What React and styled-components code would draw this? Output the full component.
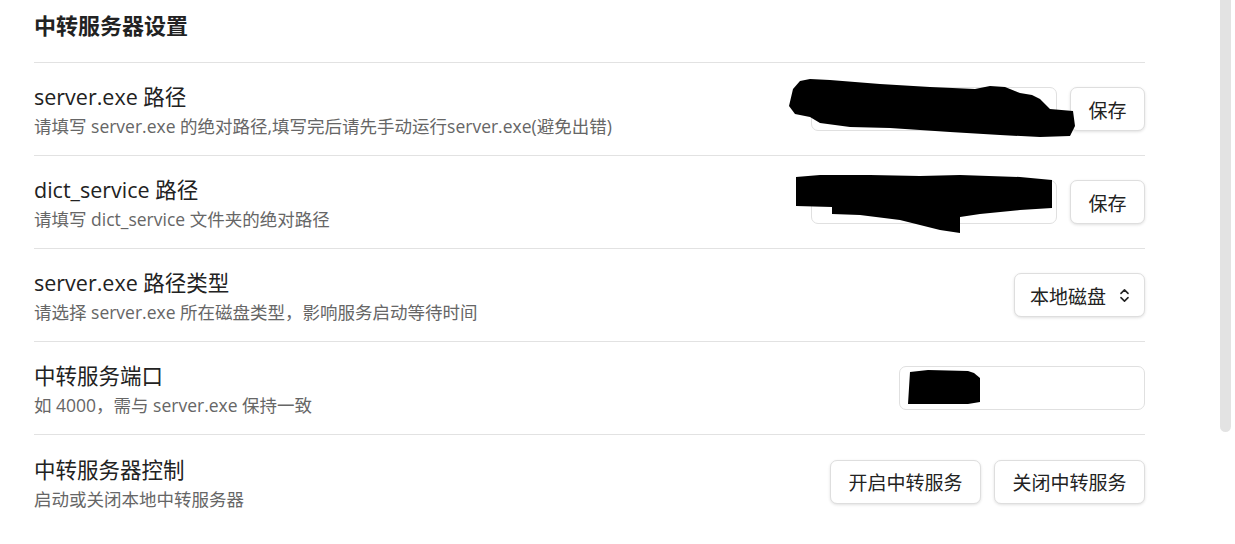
import React from "react";
import styled, { createGlobalStyle } from "styled-components";

const Global = createGlobalStyle`
  html, body { margin: 0; padding: 0; background: #fff; }
  body { font-family: "Open Sans", "Noto Sans CJK SC", sans-serif; color: #1f1f1f; overflow: hidden; }
  * { box-sizing: border-box; }
`;

const Page = styled.div`
  padding: 0 90px 0 34px;
  width: 1235px;
`;

const Heading = styled.h2`
  margin: 0;
  padding: 10px 0 21px;
  font-size: 22px;
  line-height: 31px;
  font-weight: 700;
  color: #222;
  border-bottom: 1px solid #e2e2e2;
`;

const Row = styled.div`
  display: flex;
  align-items: center;
  justify-content: space-between;
  height: 93px;
  border-bottom: ${(p) => (p.$last ? "none" : "1px solid #e2e2e2")};
`;

const Info = styled.div`
  display: flex;
  flex-direction: column;
  gap: 2px;
  padding-top: 4px;
`;

const Title = styled.div`
  font-size: 21.5px;
  line-height: 28px;
  color: #222;
`;

const Desc = styled.div`
  font-size: 17.5px;
  line-height: 26px;
  color: #666;
`;

const Controls = styled.div`
  position: relative;
  display: flex;
  align-items: center;
  gap: 13px;
`;

const Input = styled.input`
  width: 246px;
  height: 44px;
  border: 1px solid #e0e0e0;
  border-radius: 7px;
  background: #fff;
  font-size: 16px;
  padding: 0 12px;
  outline: none;
`;

const Button = styled.button`
  height: 44px;
  padding: 0 17.5px;
  border: 1px solid #dedede;
  border-radius: 7px;
  background: #fff;
  box-shadow: 0 1px 3px rgba(0, 0, 0, 0.12);
  font-family: "Noto Sans CJK SC", sans-serif;
  font-size: 19px;
  color: #222;
  cursor: pointer;
`;

const Select = styled.div`
  display: flex;
  align-items: center;
  gap: 10px;
  height: 44px;
  padding: 0 11px 0 15px;
  border: 1px solid #dedede;
  border-radius: 7px;
  background: #fff;
  box-shadow: 0 1px 3px rgba(0, 0, 0, 0.12);
  font-family: "Noto Sans CJK SC", sans-serif;
  font-size: 19px;
  color: #222;
`;

const Redact = styled.svg`
  position: absolute;
  pointer-events: none;
`;

const Thumb = styled.div`
  position: fixed;
  left: 1220px;
  top: 0;
  width: 11px;
  height: 432px;
  background: #e3e3e3;
  border-radius: 0 0 6px 6px;
`;

function Blob({ left, top, w, h, d }) {
  return (
    <Redact style={{ left, top }} width={w} height={h} viewBox={`0 0 ${w} ${h}`}>
      <path d={d} fill="#000" />
    </Redact>
  );
}

const blob1 =
  "M4 12 L11 4 L21 2 L41 3 L91 7 L141 10 L186 12 L201 9 L216 10 L231 16 L243 18 L251 22 L261 32 L284 34 L286 49 L281 59 L251 60 L211 58 L161 55 L101 51 L61 50 L31 46 L21 40 L6 37 L0 29 Z";
const blob2 =
  "M0 3 L24 1 L74 1 L124 2 L164 1 L224 3 L256 6 L256 34 L224 36 L184 40 L164 43 L164 59 L144 56 L104 46 L64 41 L36 40 L36 33 L0 32 Z";

export default function App() {
  return (
    <>
      <Global />
      <Page>
        <Heading>中转服务器设置</Heading>
        <Row>
          <Info>
            <Title>server.exe 路径</Title>
            <Desc>请填写 server.exe 的绝对路径,填写完后请先手动运行server.exe(避免出错)</Desc>
          </Info>
          <Controls>
            <Input />
            <Button>保存</Button>
            <Blob left={-22} top={-10} w={290} h={62} d={blob1} />
          </Controls>
        </Row>
        <Row>
          <Info>
            <Title>dict_service 路径</Title>
            <Desc>请填写 dict_service 文件夹的绝对路径</Desc>
          </Info>
          <Controls>
            <Input />
            <Button>保存</Button>
            <Blob left={-15} top={-6} w={260} h={62} d={blob2} />
          </Controls>
        </Row>
        <Row>
          <Info>
            <Title>server.exe 路径类型</Title>
            <Desc>请选择 server.exe 所在磁盘类型，影响服务启动等待时间</Desc>
          </Info>
          <Controls>
            <Select>
              本地磁盘
              <svg width="17" height="17" viewBox="0 0 24 24" fill="none" stroke="#222" strokeWidth="2.2" strokeLinecap="round" strokeLinejoin="round">
                <path d="m7 15 5 5 5-5" />
                <path d="m7 9 5-5 5 5" />
              </svg>
            </Select>
          </Controls>
        </Row>
        <Row>
          <Info>
            <Title>中转服务端口</Title>
            <Desc>如 4000，需与 server.exe 保持一致</Desc>
          </Info>
          <Controls>
            <Input />
            <Blob left={9} top={4} w={72} h={34} d="M2 2 L20 0 L60 1 L66 3 L72 8 L72 32 L60 34 L0 34 Z" />
          </Controls>
        </Row>
        <Row $last>
          <Info>
            <Title>中转服务器控制</Title>
            <Desc>启动或关闭本地中转服务器</Desc>
          </Info>
          <Controls>
            <Button>开启中转服务</Button>
            <Button>关闭中转服务</Button>
          </Controls>
        </Row>
      </Page>
      <Thumb />
    </>
  );
}
